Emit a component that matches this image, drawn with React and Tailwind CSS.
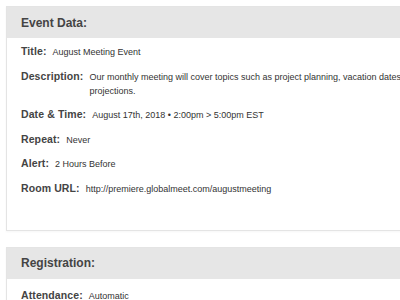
const eventRows = [
  { label: 'Title:', value: 'August Meeting Event' },
  {
    label: 'Description:',
    value: 'Our monthly meeting will cover topics such as project planning, vacation dates, and sales projections.',
  },
  { label: 'Date & Time:', value: 'August 17th, 2018 • 2:00pm > 5:00pm EST' },
  { label: 'Repeat:', value: 'Never' },
  { label: 'Alert:', value: '2 Hours Before' },
  { label: 'Room URL:', value: 'http://premiere.globalmeet.com/augustmeeting' },
]

function Row({ label, value }) {
  return (
    <div className="flex items-baseline gap-[6px]">
      <span className="shrink-0 text-[10.5px] leading-[14px] font-bold text-[#444] tracking-[0.1px]">{label}</span>
      <span className="w-[385px] text-[9px] leading-[14px] text-[#333]">{value}</span>
    </div>
  )
}

function Card({ title, children, className = '' }) {
  return (
    <section className={`w-[480px] bg-white border border-[#e4e4e4] shadow-[0_1px_2px_rgba(0,0,0,0.04)] ${className}`}>
      <div className="h-[31px] bg-[#e6e6e6] flex items-center px-[14px]">
        <h2 className="text-[12px] font-bold text-[#444]">{title}</h2>
      </div>
      {children}
    </section>
  )
}

export default function App() {
  return (
    <div
      className="w-[400px] h-[300px] overflow-hidden bg-white pl-[6px] pt-[6px]"
      style={{ fontFamily: '"Liberation Sans", Arial, sans-serif' }}
    >
      <Card title="Event Data:">
        <div className="px-[14px] pt-[6px] pb-[34px] flex flex-col gap-[9.5px]">
          {eventRows.map(r => (
            <Row key={r.label} {...r} />
          ))}
        </div>
      </Card>
      <Card title="Registration:" className="mt-[16px]">
        <div className="px-[14px] pt-[9px] pb-[20px] flex flex-col gap-[10px]">
          <Row label="Attendance:" value="Automatic" />
        </div>
      </Card>
    </div>
  )
}
